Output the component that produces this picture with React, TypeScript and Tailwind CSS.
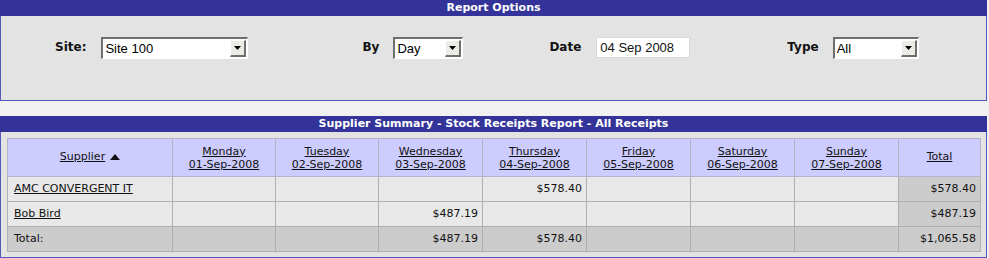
import React from 'react'

const font = { fontFamily: '"DejaVu Sans", Verdana, sans-serif' }

const FakeSelect = ({ value, width }: { value: string; width: string }) => (
    <div className={`flex h-[22px] ${width} items-stretch border-t-2 border-l-2 border-t-[#6e6e6e] border-l-[#6e6e6e] border-b border-r border-b-white border-r-white bg-white`}>
        <span className="flex-1 pl-[2px] pt-[1px] text-[13px] leading-[18px] text-black" style={{ fontFamily: '"Liberation Sans", Arial, sans-serif' }}>{value}</span>
        <div className="m-[1px] flex w-[16px] items-center justify-center border-t border-l border-t-white border-l-white border-b-2 border-r-2 border-b-[#6e6e6e] border-r-[#6e6e6e] bg-[#ecebe6]">
            <svg width="7" height="4" viewBox="0 0 7 4"><path d="M0 0h7L3.5 4z" fill="#000" /></svg>
        </div>
    </div>
)

const days = [
    ['Monday', '01-Sep-2008'],
    ['Tuesday', '02-Sep-2008'],
    ['Wednesday', '03-Sep-2008'],
    ['Thursday', '04-Sep-2008'],
    ['Friday', '05-Sep-2008'],
    ['Saturday', '06-Sep-2008'],
    ['Sunday', '07-Sep-2008'],
]

const rows = [
    { name: 'AMC CONVERGENT IT', vals: ['', '', '', '$578.40', '', '', ''], total: '$578.40' },
    { name: 'Bob Bird', vals: ['', '', '$487.19', '', '', '', ''], total: '$487.19' },
]

const totals = ['', '', '$487.19', '$578.40', '', '', '']

const App = () => {
    return (
        <div className="h-[258px] w-[989px] bg-[#f1f1f1] pr-[2px] text-[11px] text-[#111]" style={font}>
            <div className="border-x border-b border-[#5555bb]">
                <div className="-mx-px h-[16px] bg-[#333399] text-center text-[11px] font-bold leading-[16px] text-white">Report Options</div>
                <div className="flex h-[84px] items-start bg-[#e3e3e3] pt-[21px]">
                    <div className="ml-[54px] flex items-start">
                        <span className="pt-[1px] text-[12px] font-bold">Site:</span>
                        <div className="ml-[15px]"><FakeSelect value="Site 100" width="w-[147px]" /></div>
                    </div>
                    <div className="ml-[114px] flex items-start">
                        <span className="pt-[1px] text-[12px] font-bold">By</span>
                        <div className="ml-[14px]"><FakeSelect value="Day" width="w-[70px]" /></div>
                    </div>
                    <div className="ml-[86px] flex items-start">
                        <span className="pt-[1px] text-[12px] font-bold">Date</span>
                        <div className="ml-[15px] h-[21px] w-[94px] border border-[#d8d8d8] bg-white pl-[3px] text-[13px] leading-[20px]" style={{ fontFamily: '"Liberation Sans", Arial, sans-serif' }}>04 Sep 2008</div>
                    </div>
                    <div className="ml-[97px] flex items-start">
                        <span className="pt-[1px] text-[12px] font-bold">Type</span>
                        <div className="ml-[14px]"><FakeSelect value="All" width="w-[86px]" /></div>
                    </div>
                </div>
            </div>

            <div className="mt-[15px] border-x border-b border-[#5555bb]">
                <div className="-mx-px h-[16px] bg-[#333399] text-center text-[11px] font-bold leading-[16px] text-white">Supplier Summary - Stock Receipts Report - All Receipts</div>
                <div className="bg-[#e3e3e3] px-[6px] pb-[5px] pt-[6px]">
                    <table className="w-[974px] table-fixed border-collapse border border-[#dcdcdc]">
                        <colgroup>
                            <col className="w-[165px]" />
                            <col className="w-[103px]" />
                            <col className="w-[103px]" />
                            <col className="w-[104px]" />
                            <col className="w-[104px]" />
                            <col className="w-[104px]" />
                            <col className="w-[104px]" />
                            <col className="w-[104px]" />
                            <col />
                        </colgroup>
                        <thead>
                            <tr className="h-[38px] bg-[#ccccff]">
                                <th className="border border-[#b4b4c8] font-normal">
                                    <span className="underline">Supplier</span>
                                    <span className="ml-[5px] inline-block align-middle">
                                        <svg width="10" height="6" viewBox="0 0 10 6"><path d="M0 6L5 0l5 6z" fill="#111" /></svg>
                                    </span>
                                </th>
                                {days.map(([d, dt]) => (
                                    <th key={d} className="border border-[#b4b4c8] font-normal leading-[13px]">
                                        <span className="underline">{d}</span><br />
                                        <span className="underline">{dt}</span>
                                    </th>
                                ))}
                                <th className="border border-[#b4b4c8] font-normal"><span className="underline">Total</span></th>
                            </tr>
                        </thead>
                        <tbody>
                            {rows.map(r => (
                                <tr key={r.name} className="h-[25px] bg-[#e8e8e8]">
                                    <td className="border border-[#b0b0b0] pl-[6px]"><span className="underline">{r.name}</span></td>
                                    {r.vals.map((v, i) => (
                                        <td key={i} className="border border-[#b0b0b0] pr-[4px] text-right">{v}</td>
                                    ))}
                                    <td className="border border-[#b0b0b0] bg-[#cccccc] pr-[4px] text-right">{r.total}</td>
                                </tr>
                            ))}
                            <tr className="h-[25px] bg-[#cccccc]">
                                <td className="border border-[#b0b0b0] pl-[6px]">Total:</td>
                                {totals.map((v, i) => (
                                    <td key={i} className="border border-[#b0b0b0] pr-[4px] text-right">{v}</td>
                                ))}
                                <td className="border border-[#b0b0b0] pr-[4px] text-right">$1,065.58</td>
                            </tr>
                        </tbody>
                    </table>
                </div>
            </div>
        </div>
    )
}

export default App
